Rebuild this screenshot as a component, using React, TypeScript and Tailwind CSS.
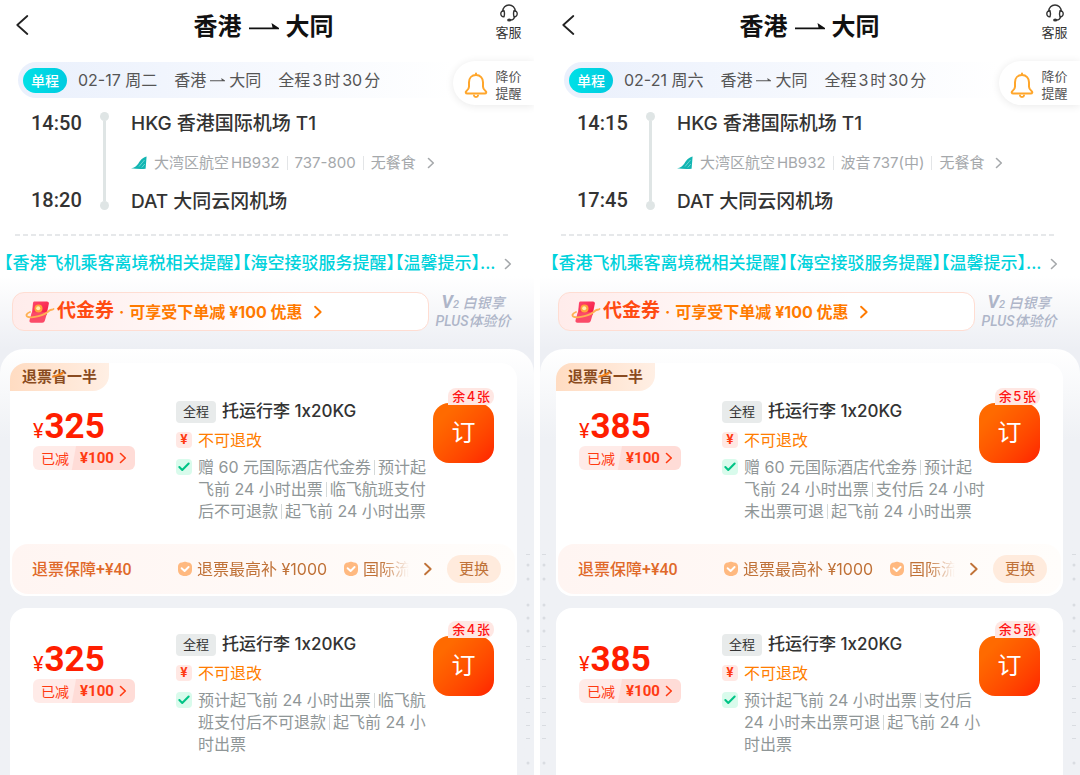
import { Check } from "lucide-react"

interface Fare {
  tag?: string
  lines: string[]
  insurance?: boolean
}

interface Flight {
  id: string
  inset: string
  date: string
  depart: string
  arrive: string
  info: string[]
  price: number
  seats: number
  fares: Fare[]
}

const flights: Flight[] = [
  {
    id: "feb-17",
    inset: "",
    date: "02-17 周二",
    depart: "14:50",
    arrive: "18:20",
    info: ["大湾区航空HB932", "737-800", "无餐食"],
    price: 325,
    seats: 4,
    fares: [
      {
        tag: "退票省一半",
        lines: ["赠 60 元国际酒店代金券|预计起", "飞前 24 小时出票|临飞航班支付", "后不可退款|起飞前 24 小时出票"],
        insurance: true,
      },
      {
        lines: ["预计起飞前 24 小时出票|临飞航", "班支付后不可退款|起飞前 24 小", "时出票"],
      },
    ],
  },
  {
    id: "feb-21",
    inset: "pl-[6px]",
    date: "02-21 周六",
    depart: "14:15",
    arrive: "17:45",
    info: ["大湾区航空HB932", "波音737(中)", "无餐食"],
    price: 385,
    seats: 5,
    fares: [
      {
        tag: "退票省一半",
        lines: ["赠 60 元国际酒店代金券|预计起", "飞前 24 小时出票|支付后 24 小时", "未出票可退|起飞前 24 小时出票"],
        insurance: true,
      },
      {
        lines: ["预计起飞前 24 小时出票|支付后", "24 小时未出票可退|起飞前 24 小", "时出票"],
      },
    ],
  },
]

function Chevron({ className }: { className: string }) {
  return (
    <svg viewBox="0 0 8 12" fill="none" className={`shrink-0 ${className}`} aria-hidden="true">
      <path d="M1.5 1.5 6.3 6l-4.8 4.5" stroke="currentColor" strokeWidth="1.6" strokeLinecap="round" strokeLinejoin="round" />
    </svg>
  )
}

function RouteArrow({ className }: { className: string }) {
  return (
    <svg viewBox="0 0 30 8" className={`shrink-0 ${className}`} aria-hidden="true">
      <path d="M0 4.6h23.500L22.500 0 30 5v1.300H0z" fill="currentColor" />
    </svg>
  )
}

function Headset() {
  return (
    <svg width="20" height="18" viewBox="0 0 20 18" fill="none" stroke="#333" strokeWidth="1.4" strokeLinecap="round" aria-hidden="true">
      <path d="M3.8 7.4C3.8 3.6 6.5 1 10 1s6.2 2.6 6.2 6.4" />
      <path d="M5 6.8c-1.9-.3-3.2 1-3.2 2.9s1.3 3.2 3.2 3c.6-1.9.6-4 0-5.900zM15 6.800c1.900-.3 3.200 1 3.200 2.900s-1.300 3.200-3.200 3c-.6-1.900-.6-4 0-5.900z" />
      <path d="M15.6 12.8c-.5 2.200-2 3.200-4 3.300" />
      <ellipse cx="10.2" cy="16.1" rx="1.4" ry=".8" fill="#333" />
    </svg>
  )
}

function Bell() {
  return (
    <svg width="24" height="27" viewBox="0 0 24 27" fill="none" stroke="#ffa62b" strokeWidth="2" strokeLinecap="round" strokeLinejoin="round" aria-hidden="true">
      <path d="M12 3c-4.300 0-7 3.100-7 7.200v4.600c0 1.800-.8 2.900-2.500 4.200-1.300 1-.9 2.500.8 2.500h17.400c1.700 0 2.100-1.500.8-2.500-1.700-1.300-2.500-2.400-2.500-4.200v-4.600C19 6.100 16.300 3 12 3z" />
      <path d="M12 1.400V3M10 23.500c.2 1.900 3.800 1.900 4 0" />
    </svg>
  )
}

function TailLogo() {
  return (
    <svg width="16" height="14" viewBox="0 0 16 14" aria-hidden="true">
      <path d="M0 12.200c3.500-.6 5.500-2.200 7.400-4.800C9.400 4.400 11 1.900 15.600.6L14.600 12.800c-5 .4-10 .2-14.600-.6z" fill="#12b5b2" />
      <path d="M8 10.500 13.500 4M10.800 11.500l3-3.500" stroke="#8fe3df" strokeWidth=".7" fill="none" />
    </svg>
  )
}

function CouponIcon() {
  return (
    <svg width="30" height="24" viewBox="0 0 30 24" aria-hidden="true">
      <defs>
        <linearGradient id="coupon" x1="0" y1="0" x2="1" y2="1">
          <stop offset="0" stopColor="#ff4a6e" />
          <stop offset="1" stopColor="#f5143f" />
        </linearGradient>
      </defs>
      <path d="M9.500 1.500h12.300c1.700 0 2.300 1 2 2.600L21.500 15H6.800L8 3c.1-.9.600-1.500 1.500-1.500z" fill="url(#coupon)" />
      <path d="M6.800 12.200h15.500l-2.500 8.600c-.4 1.300-1.200 1.900-2.600 1.900H6.500c-1.700 0-2.400-1-1.900-2.600z" fill="#fb4a68" />
      <circle cx="13.500" cy="8.500" r="4" fill="#ffa43c" />
      <circle cx="13.200" cy="8.200" r="2" fill="#fff0b0" />
      <path d="M5 12c-4 1.500-4.500 4-2 4.800 5 1.500 16-1 21.500-6.300 1.500-1.200 3-.3 4-1.500" fill="none" stroke="#ffb052" strokeWidth="1.800" strokeLinecap="round" />
    </svg>
  )
}

function Shield() {
  return (
    <svg width="16" height="16" viewBox="0 0 16 16" className="shrink-0" aria-hidden="true">
      <path d="M5 1.500c1.200-.1 2.100-.7 3-.7s1.800.6 3 .7c2.600.2 4 1.600 4 4V9c0 3.800-2.600 6-7 6s-7-2.200-7-6V5.500c0-2.400 1.400-3.800 4-4z" fill="#ffb980" />
      <path d="m4.600 7.200 3 2.800 4-4" fill="none" stroke="#fff" strokeWidth="1.900" strokeLinecap="round" strokeLinejoin="round" />
    </svg>
  )
}

// Faint watermark specks that run down the page edge
function EdgeSpecks({ className }: { className: string }) {
  const dots = [11, 25, 51, 64, 77, 209]
  const dashes = [1, 93, 106, 133, 145, 159, 172, 185]
  return (
    <svg width="4" height="216" className={`absolute top-[205px] ${className}`} fill="#d9dce1" aria-hidden="true">
      {dots.map((y) => (
        <circle key={y} cx="2" cy={y} r="1.5" />
      ))}
      {dashes.map((y) => (
        <rect key={y} x="0" y={y - 1} width="4" height="1" />
      ))}
    </svg>
  )
}

function DetailLine({ text }: { text: string }) {
  const parts = text.split("|")
  return (
    <p className="flex items-center whitespace-nowrap">
      {parts.map((part, i) => (
        <span key={part} className="flex items-center">
          {i > 0 && <span className="mx-[3px] h-[15px] w-px bg-[#d5dada]" />}
          {part}
        </span>
      ))}
    </p>
  )
}

function FareCard({ fare, price, seats, last }: { fare: Fare; price: number; seats: number; last: boolean }) {
  return (
    <article className={`bg-white ${last ? "flex-1 rounded-t-2xl pt-[26px]" : "rounded-2xl"}`}>
      {fare.tag && (
        <div className="mb-[10px] flex">
          <span className="relative flex h-7 items-center rounded-tl-2xl rounded-br-2xl bg-linear-to-r from-[#ffdcc2] to-[#ffefe4] px-3 text-[15px] font-bold text-[#8a4b20]">
            {fare.tag}
            <svg width="14" height="7" viewBox="0 0 14 7" className="absolute top-2 left-[42px]" aria-hidden="true">
              <path d="M0 5.500 13 .5 10 4 0 6.800z" fill="#ff8a1f" />
            </svg>
          </span>
        </div>
      )}

      <div className="grid grid-cols-[143px_1fr_61px] px-[23px]">
        <div className="pt-[7px]">
          <p className="flex items-baseline gap-px font-['Roboto','Noto_Sans_CJK_SC',sans-serif] text-[#ff1e00]">
            <span className="text-[20px]">¥</span>
            <span className="text-[35px] leading-[38px] font-bold">{price}</span>
          </p>
          <button type="button" className="flex h-6 items-center rounded-md bg-linear-[100deg,#ffebe8_40%,#ffdcd7_41%] px-2 text-[14px] text-[#ff3a12]">
            已减
            <span className="ml-[11px] font-['Roboto',sans-serif] text-[15px] font-bold">¥100</span>
            <Chevron className="ml-[5px] h-3 w-2" />
          </button>
        </div>

        <div className="min-w-0">
          <div className="flex h-[22px] items-center gap-[6px] whitespace-nowrap text-[#333]">
            <span className="flex h-[22px] items-center rounded bg-[#e8ebeb] px-[7px] text-[13px]">全程</span>
            <h3 className="text-[17px] font-medium">托运行李 1x20KG</h3>
          </div>
          <div className="mt-[6px] flex h-[22px] items-center gap-[6px] text-[16px] text-[#ff7d00]">
            <span className="flex size-4 items-center justify-center rounded bg-[#ffe8e4] text-[13px] font-bold text-[#ff3a12]">¥</span>
            不可退改
          </div>
          <div className="mt-[5px] flex gap-[6px] text-[16px] leading-[22px] text-[#8f9697]">
            <span className="mt-[3px] flex size-4 shrink-0 items-center justify-center rounded bg-[#d9fbec] text-[#00c486]">
              <Check size={14} strokeWidth={3.5} />
            </span>
            <div>
              {fare.lines.map((line) => (
                <DetailLine key={line} text={line} />
              ))}
            </div>
          </div>
        </div>

        <button
          type="button"
          className="relative mt-[2px] h-[60px] rounded-2xl bg-linear-135 from-[#ff6a00] from-20% to-[#ff1e00] text-[24px] text-white"
        >
          订
          <span className="absolute -top-[15px] right-0 flex h-[17px] items-center rounded-t-lg rounded-br-lg bg-[#ffe7e3] px-1 text-[13px] font-medium whitespace-nowrap text-[#ff1414] [text-autospace:normal]">
            余{seats}张
          </span>
        </button>
      </div>

      {fare.insurance && (
        <div className="mx-[2px] mt-[22px] mb-[2px] flex h-[50px] items-center rounded-2xl bg-linear-to-r from-[#fff5f2] to-[#fffdfb] pr-[14px] pl-5 text-[16px] whitespace-nowrap text-[#c07238]">
          <p className="w-[145px] shrink-0 text-[#e0692a]">
            <strong className="font-medium">退票保障</strong>
            <span className="font-['Roboto'] font-medium">+¥40</span>
          </p>
          <div className="flex min-w-0 flex-1 items-center overflow-hidden mask-r-from-88%">
            <Shield />
            <span className="mr-4 ml-1">退票最高补 ¥1000</span>
            <Shield />
            <span className="ml-1">国际流</span>
          </div>
          <button type="button" aria-label="查看保障" className="mx-[14px]">
            <Chevron className="h-[14px] w-[10px]" />
          </button>
          <button type="button" className="h-7 rounded-full bg-[#ffebdd] px-[12px] text-[15px]">
            更换
          </button>
        </div>
      )}
    </article>
  )
}

function FlightPanel({ flight }: { flight: Flight }) {
  return (
    <section aria-labelledby={flight.id} className="flex min-w-0 flex-col overflow-hidden bg-[#eff1f5]">
      <div className={`bg-white ${flight.inset}`}>
        <header className="flex h-[54px] items-center justify-between pr-3 pl-4">
          <button type="button" aria-label="返回" className="w-4 pb-1">
            <svg width="13" height="20" viewBox="0 0 13 20" fill="none" stroke="#222" strokeWidth="1.800" strokeLinecap="round" strokeLinejoin="round" aria-hidden="true">
              <path d="M11.300 1 1.300 10l10 9" />
            </svg>
          </button>
          <h2 id={flight.id} className="flex items-center gap-[7px] text-[24px] font-bold text-[#111]">
            香港
            <RouteArrow className="h-2 w-[30px]" />
            大同
          </h2>
          <button type="button" className="flex w-[27px] flex-col items-center pb-2 text-[13px] leading-[20px] whitespace-nowrap text-[#333]">
            <Headset />
            客服
          </button>
        </header>

        <div className="flex items-start pt-[7px] pl-[18px]">
          <div className="mt-px flex h-9 flex-1 items-center rounded-l-full bg-linear-to-r from-[#eaf0fc] to-white pl-[5px] text-[16px] whitespace-nowrap text-[#555] [text-autospace:normal]">
            <span className="mr-[11px] flex h-[25px] items-center rounded-full bg-linear-to-r from-[#00e0e6] to-[#00cbe0] px-2 text-[14px] font-medium text-white">
              单程
            </span>
            <span>{flight.date}</span>
            <span className="mx-[17px] flex items-center gap-1">
              香港
              <RouteArrow className="h-1 w-[15px]" />
              大同
            </span>
            <span>全程3时30分</span>
          </div>
          <button
            type="button"
            className="flex h-11 items-center gap-[7px] rounded-l-full bg-white pt-1 pr-3 pl-[11px] text-[13px] leading-[17px] text-[#555] shadow-[0_1px_8px_rgba(0,0,0,0.09)]"
          >
            <Bell />
            <span className="w-[27px]">
              降价
              <br />
              提醒
            </span>
          </button>
        </div>

        <div className="flex h-[111px] pl-[31px]">
          <div className="mt-[5px] flex w-[49px] flex-col justify-between pb-[3px] text-right font-['Roboto',sans-serif] text-[20px] leading-[26px] font-medium whitespace-nowrap text-[#333]">
            <time>{flight.depart}</time>
            <time>{flight.arrive}</time>
          </div>
          <div className="mt-[7px] mb-[6px] ml-5 flex w-[9px] flex-col items-center">
            <span className="size-[9px] rounded-full bg-[#dfe5e5]" />
            <span className="w-[3px] flex-1 bg-[#dfe5e5]" />
            <span className="size-[9px] rounded-full bg-[#dfe5e5]" />
          </div>
          <div className="mt-[5px] ml-[22px] flex flex-col justify-between text-[19px] leading-[28px] font-medium whitespace-nowrap text-[#333]">
            <p>HKG 香港国际机场 T1</p>
            <button type="button" className="flex items-center text-[15px] font-normal text-[#a5a8ab] [text-autospace:normal]">
              <TailLogo />
              {flight.info.map((item, i) => (
                <span key={item} className={`flex items-center ${i === 0 ? "ml-[7px]" : ""}`}>
                  {i > 0 && <span className="mx-[7px] h-[14px] w-px bg-[#e3e5e7]" />}
                  {item}
                </span>
              ))}
              <Chevron className="ml-[11px] h-3 w-2" />
            </button>
            <p>DAT 大同云冈机场</p>
          </div>
        </div>

        <div className="mt-[18px] mr-[26px] ml-[15px] h-[2px] bg-[repeating-linear-gradient(90deg,#e6e8ea_0_5px,transparent_5px_8px)]" />

        <button
          type="button"
          className="mt-4 flex h-6 w-full items-center justify-between pr-[22px] pl-1 text-[17px] font-medium whitespace-nowrap text-[#00d2dc]"
        >
          <span className="[font-feature-settings:'halt']">【香港飞机乘客离境税相关提醒】【海空接驳服务提醒】【温馨提示】...</span>
          <Chevron className="h-3 w-2 text-[#a5a8ab]" />
        </button>
      </div>

      <div className={`flex items-center bg-linear-to-b from-white to-[#edeff4] pt-[16px] pb-[18px] ${flight.inset}`}>
        <button
          type="button"
          className="ml-3 flex h-[39px] min-w-0 flex-1 items-center rounded-xl border border-[#ffddd2] bg-linear-to-r from-[#ffeceb] to-white to-70% pl-3 text-[16px] font-bold whitespace-nowrap text-[#ff7a00]"
        >
          <CouponIcon />
          <span className="ml-[2px] text-[19px] text-[#ff4b12]">代金券</span>
          <span className="mx-[5px]">·</span>
          可享受下单减 ¥100 优惠
          <Chevron className="ml-[10px] h-[14px] w-[10px]" />
        </button>
        <p className="mr-[23px] ml-[6px] w-[76px] text-center font-['Roboto','Noto_Sans_CJK_SC',sans-serif] text-[14px] leading-[17px] font-medium whitespace-nowrap text-[#aeb5c8] italic">
          <span className="text-[18px] leading-none font-bold">V</span>
          <span className="text-[11px]">2</span> 白银享
          <br />
          PLUS体验价
        </p>
      </div>

      <div className="flex flex-1 flex-col bg-[#edeff4]">
        <div
          className={`relative flex flex-1 flex-col gap-3 rounded-t-3xl bg-linear-to-b from-white to-[#eff1f5] to-[90px] pt-[14px] ${flight.inset}`}
        >
          {flight.inset && <EdgeSpecks className="left-[2px]" />}
          <EdgeSpecks className="right-1" />
          <div className="mr-[17px] ml-[10px] flex flex-1 flex-col gap-3">
            {flight.fares.map((fare, i) => (
              <FareCard key={fare.lines[0]} fare={fare} price={flight.price} seats={flight.seats} last={i === flight.fares.length - 1} />
            ))}
          </div>
        </div>
      </div>
    </section>
  )
}

export default function App() {
  return (
    <main
      lang="zh-CN"
      className="grid min-h-screen grid-cols-[534fr_540fr] gap-[6px] bg-white font-['Inter','Noto_Sans_CJK_SC',sans-serif]"
    >
      {flights.map((flight) => (
        <FlightPanel key={flight.id} flight={flight} />
      ))}
    </main>
  )
}
